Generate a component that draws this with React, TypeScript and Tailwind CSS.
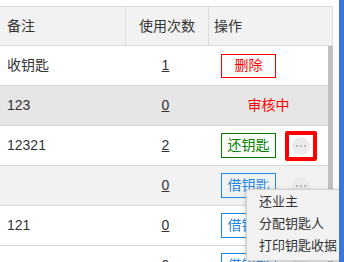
import React from 'react';

type Row = {
  note: string;
  count: string;
  bg: string;
  action: 'delete' | 'review' | 'return' | 'borrow';
  highlight?: boolean;
};

const rows: Row[] = [
  { note: '收钥匙', count: '1', bg: 'bg-white', action: 'delete' },
  { note: '123', count: '0', bg: 'bg-[#e6e6e6]', action: 'review' },
  { note: '12321', count: '2', bg: 'bg-white', action: 'return', highlight: true },
  { note: '', count: '0', bg: 'bg-[#f2f2f2]', action: 'borrow' },
  { note: '121', count: '0', bg: 'bg-white', action: 'borrow' },
  { note: '', count: '0', bg: 'bg-white', action: 'borrow' },
];

function MoreButton({ highlight }: { highlight?: boolean }) {
  return (
    <div
      className={`ml-[9px] p-[2px] px-[3px] rounded-[2px] border-4 ${
        highlight ? 'border-[#ff0000]' : 'border-transparent'
      }`}
    >
      <div className="w-[18px] h-[18px] rounded-full bg-[#ebebeb] flex items-center justify-center gap-[2px]">
        <span className="w-[2px] h-[2px] rounded-full bg-[#a8a8a8]" />
        <span className="w-[2px] h-[2px] rounded-full bg-[#a8a8a8]" />
        <span className="w-[2px] h-[2px] rounded-full bg-[#a8a8a8]" />
      </div>
    </div>
  );
}

function Action({ row }: { row: Row }) {
  if (row.action === 'review') {
    return <div className="w-full text-center text-[#ff0000]">审核中</div>;
  }
  if (row.action === 'delete') {
    return (
      <div className="pl-[12px]">
        <div className="w-[55px] h-[24px] border border-[#ff0000] text-[#ff0000] flex items-center justify-center">
          删除
        </div>
      </div>
    );
  }
  const green = row.action === 'return';
  return (
    <div className="pl-[12px] flex items-center">
      <div
        className={`w-[55px] h-[25px] border flex items-center justify-center ${
          green ? 'border-[#008000] text-[#008000]' : 'border-[#1e88e5] text-[#1e88e5]'
        }`}
      >
        {green ? '还钥匙' : '借钥匙'}
      </div>
      <MoreButton highlight={row.highlight} />
    </div>
  );
}

export default function App() {
  return (
    <div
      className="w-[344px] h-[262px] overflow-hidden bg-white flex relative text-[14px] text-[#333]"
      style={{ fontFamily: '"Liberation Sans", "Noto Sans CJK SC", sans-serif' }}
    >
      <div className="w-[339px] pt-[6px] flex flex-col">
        {/* Header */}
        <div className="w-[333px] h-[40px] flex bg-[#f2f2f2] border-y border-r border-[#dddddd] shrink-0">
          <div className="w-[126px] border-r border-[#dddddd] flex items-center pl-[7px]">备注</div>
          <div className="w-[83px] border-r border-[#dddddd] flex items-center justify-center">使用次数</div>
          <div className="flex-1 flex items-center pl-[5px]">操作</div>
        </div>

        {/* Body */}
        <div className="flex flex-1">
          <div className="w-[328px]">
            {rows.map((row, i) => (
              <div key={i} className={`h-[40px] flex border-b border-[#d6d6d6] ${row.bg}`}>
                <div className="w-[126px] flex items-center pl-[7px]">{row.note}</div>
                <div className="w-[83px] flex items-center justify-center pr-[4px]">
                  <span className="underline">{row.count}</span>
                </div>
                <div className="flex-1 flex items-center">
                  <Action row={row} />
                </div>
              </div>
            ))}
          </div>
          <div className="w-[5px] bg-[#c1c1c1]" />
        </div>
      </div>
      <div className="w-[5px] bg-[#3a78d8] relative z-10" />

      {/* Dropdown menu */}
      <div className="absolute left-[246px] top-[189px] w-[100px] pt-[1px] pb-[3px] bg-[#f2f2f2] border border-[#d0d0d0] shadow-[0_1px_4px_rgba(0,0,0,0.25)] text-[13px] text-[#333]">
        <div className="h-[22px] flex items-center pl-[12px]">还业主</div>
        <div className="h-[22px] flex items-center pl-[12px]">分配钥匙人</div>
        <div className="h-[22px] flex items-center pl-[12px]">打印钥匙收据</div>
      </div>
    </div>
  );
}
